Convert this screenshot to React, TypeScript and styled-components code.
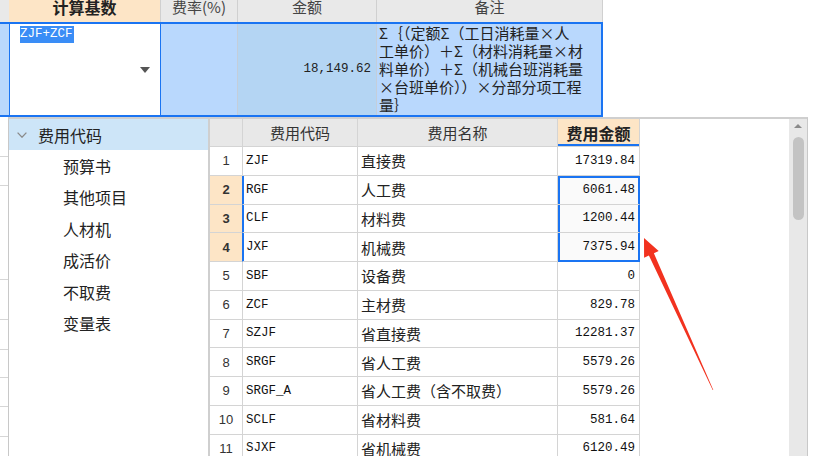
import React from "react";
import styled, { createGlobalStyle, css } from "styled-components";

const CJK = `"Noto Sans CJK SC", "Noto Sans", sans-serif`;
const MONO = `"Liberation Mono", "Noto Sans CJK SC", monospace`;
const BLUE = "#1a74f2";
const PEACH = "#fde5c6";
const LINE = "#d4d4d4";

const GlobalStyle = createGlobalStyle`
  html, body { margin: 0; padding: 0; background: #fff; }
  body { font-family: ${CJK}; }
  #root { width: 825px; height: 456px; }
`;

const Page = styled.div`
  position: relative;
  width: 825px;
  height: 456px;
  overflow: hidden;
  background: #fff;
  display: flex;
  flex-direction: column;
  font-family: ${CJK};
  color: #222;
`;

/* ---------- background sheet ---------- */
const SheetHeader = styled.div`
  display: flex;
  height: 22px;
  width: 603px;
  flex: none;
`;

const HeadCell = styled.div<{ $w: number; $active?: boolean; $stub?: boolean }>`
  width: ${(p) => p.$w}px;
  flex: none;
  box-sizing: border-box;
  height: 22px;
  background: ${(p) => (p.$active ? PEACH : "#e9e9e9")};
  border-right: ${(p) => (p.$stub ? "none" : "1px solid #d0d0d0")};
  display: flex;
  align-items: center;
  justify-content: center;
  padding-bottom: 8px;
  font-size: ${(p) => (p.$active ? 16 : 15)}px;
  font-weight: ${(p) => (p.$active ? 700 : 400)};
  line-height: 14px;
  color: ${(p) => (p.$active ? "#222" : "#444")};
  white-space: nowrap;
`;

const SelRow = styled.div`
  display: flex;
  width: 603px;
  height: 95px;
  flex: none;
  box-sizing: border-box;
  border: 2px solid ${BLUE};
  border-left: none;
`;

const RowCell = styled.div<{ $w?: number; $bg: string }>`
  ${(p) => (p.$w ? `width: ${p.$w}px; flex: none;` : "flex: 1;")}
  box-sizing: border-box;
  background: ${(p) => p.$bg};
  border-right: 1px solid #c4ceda;
`;

const StubCell = styled.div`
  width: 9px;
  flex: none;
  background: #b9d8fd;
`;

const EditorCell = styled.div`
  width: 152px;
  flex: none;
  box-sizing: border-box;
  background: #fff;
  border-left: 1px solid ${BLUE};
  border-right: 1px solid ${BLUE};
  padding: 2px 10px 0 10px;
  display: flex;
  flex-direction: column;
`;

const SelText = styled.span`
  align-self: flex-start;
  background: #3a8df6;
  color: #fff;
  font-family: ${MONO};
  font-size: 12.5px;
  line-height: 17px;
  padding-right: 1px;
`;

const DropTri = styled.span`
  align-self: flex-end;
  margin-top: 24px;
  width: 0;
  height: 0;
  border-left: 5px solid transparent;
  border-right: 5px solid transparent;
  border-top: 6px solid #555;
`;

const AmountCell = styled(RowCell)`
  display: flex;
  align-items: center;
  justify-content: flex-end;
  padding-right: 5px;
  padding-bottom: 2px;
  font-family: ${MONO};
  font-size: 12.5px;
  color: #222;
`;

const NoteCell = styled(RowCell)`
  border-right: none;
  padding-left: 2px;
  font-size: 15px;
  line-height: 18px;
  color: #222;
  white-space: nowrap;
`;

/* ---------- lower area ---------- */
const Lower = styled.div`
  display: flex;
  flex: 1;
  min-height: 0;
`;

const LeftStrip = styled.div`
  width: 8px;
  flex: none;
  display: flex;
  flex-direction: column;
`;

const StripRow = styled.div<{ $h: number }>`
  height: ${(p) => p.$h}px;
  flex: none;
  box-sizing: border-box;
  border-bottom: 1px solid #d6d6d6;
`;

const Popup = styled.div`
  width: 800px;
  flex: none;
  box-sizing: border-box;
  border-top: 2px solid #cfcfcf;
  border-left: 1px solid #c8c8c8;
  border-right: 1px solid #c8c8c8;
  background: #fff;
  display: flex;
`;

const Tree = styled.div`
  width: 201px;
  flex: none;
  box-sizing: border-box;
  border-right: 2px solid #cfcfcf;
  display: flex;
  flex-direction: column;
`;

const TreeItem = styled.div<{ $root?: boolean }>`
  display: flex;
  align-items: center;
  gap: 11px;
  font-size: 16px;
  color: #222;
  white-space: nowrap;
  ${(p) =>
    p.$root
      ? css`
          height: 31px;
          padding-left: 8px;
          background: #cde5f8;
        `
      : css`
          height: 31.5px;
          padding-left: 54px;
        `}
`;

const GridPanel = styled.div`
  flex: 1;
  display: flex;
`;

const GridTable = styled.div`
  width: 430px;
  flex: none;
  display: grid;
  grid-template-columns: 33px 115px 200px 82px;
  grid-template-rows: 28px repeat(11, 28.75px);
  align-content: start;
`;

const Cell = styled.div`
  box-sizing: border-box;
  border-right: 1px solid ${LINE};
  border-bottom: 1px solid ${LINE};
  display: flex;
  align-items: center;
  white-space: nowrap;
  overflow: hidden;
`;

const GridHead = styled(Cell)<{ $active?: boolean }>`
  justify-content: center;
  background: ${(p) => (p.$active ? PEACH : "#e8e8e8")};
  font-size: ${(p) => (p.$active ? 16 : 15)}px;
  font-weight: ${(p) => (p.$active ? 700 : 400)};
  color: ${(p) => (p.$active ? "#222" : "#333")};
  ${(p) => p.$active && css`box-shadow: inset 0 -2px ${BLUE};`}
`;

const NumCell = styled(Cell)<{ $sel?: boolean }>`
  justify-content: center;
  font-family: "Liberation Sans", "DejaVu Sans", sans-serif;
  font-size: 13px;
  color: #333;
  ${(p) =>
    p.$sel &&
    css`
      background: ${PEACH};
      font-weight: 700;
      border-right-color: ${BLUE};
    `}
`;

const CodeCell = styled(Cell)<{ $sel?: boolean }>`
  padding-left: 3px;
  font-family: ${MONO};
  font-size: 12.5px;
  color: #111;
  ${(p) => p.$sel && css`box-shadow: inset 1px 0 ${BLUE};`}
`;

const NameCell = styled(Cell)`
  padding-left: 3px;
  font-size: 15px;
  color: #222;
`;

const AmtCell = styled(Cell)<{ $sel?: boolean; $first?: boolean; $last?: boolean }>`
  justify-content: flex-end;
  padding-right: 4px;
  font-family: ${MONO};
  font-size: 12.5px;
  color: #111;
  ${(p) =>
    p.$sel &&
    css`
      background: #fafafa;
      border-right-color: ${BLUE};
      ${p.$last ? `border-bottom-color: ${BLUE};` : ""}
      box-shadow: inset 2px 0 ${BLUE}, inset -1px 0 ${BLUE}
        ${p.$first ? `, inset 0 2px ${BLUE}` : ""}
        ${p.$last ? `, inset 0 -1px ${BLUE}` : ""};
    `}
`;

const GridSpace = styled.div`
  flex: 1;
`;

const Scrollbar = styled.div`
  width: 18px;
  flex: none;
  background: #e8e8e8;
  display: flex;
  flex-direction: column;
  align-items: center;
  padding-top: 5px;
  box-sizing: border-box;
`;

const ScrollUp = styled.span`
  width: 0;
  height: 0;
  border-left: 4.5px solid transparent;
  border-right: 4.5px solid transparent;
  border-bottom: 4px solid #8a8a8a;
`;

const ScrollThumb = styled.div`
  margin-top: 9px;
  width: 11px;
  height: 83px;
  border-radius: 6px;
  background: #c3c3c3;
`;

const ArrowLayer = styled.svg`
  position: absolute;
  left: 0;
  top: 0;
  width: 825px;
  height: 456px;
  pointer-events: none;
`;

const noteLines = [
  "Σ｛（定额Σ（工日消耗量×人",
  "工单价）＋Σ（材料消耗量×材",
  "料单价）＋Σ（机械台班消耗量",
  "×台班单价））×分部分项工程",
  "量｝",
];

const treeChildren = ["预算书", "其他项目", "人材机", "成活价", "不取费", "变量表"];

const rows: [number, string, string, string][] = [
  [1, "ZJF", "直接费", "17319.84"],
  [2, "RGF", "人工费", "6061.48"],
  [3, "CLF", "材料费", "1200.44"],
  [4, "JXF", "机械费", "7375.94"],
  [5, "SBF", "设备费", "0"],
  [6, "ZCF", "主材费", "829.78"],
  [7, "SZJF", "省直接费", "12281.37"],
  [8, "SRGF", "省人工费", "5579.26"],
  [9, "SRGF_A", "省人工费（含不取费）", "5579.26"],
  [10, "SCLF", "省材料费", "581.64"],
  [11, "SJXF", "省机械费", "6120.49"],
];

const stripHeights = [40, 29, 94, 40, 30, 28, 29, 30, 40];

const Chevron = () => (
  <svg width="10" height="6" viewBox="0 0 10 6">
    <polyline points="0.6,0.6 5,5.2 9.4,0.6" fill="none" stroke="#8a8a8a" strokeWidth="1.3" />
  </svg>
);

export default function App() {
  return (
    <>
      <GlobalStyle />
      <Page>
        <SheetHeader>
          <HeadCell $w={9} $stub />
          <HeadCell $w={152} $active>计算基数</HeadCell>
          <HeadCell $w={77}>费率(%)</HeadCell>
          <HeadCell $w={139}>金额</HeadCell>
          <HeadCell $w={226}>备注</HeadCell>
        </SheetHeader>
        <SelRow>
          <StubCell />
          <EditorCell>
            <SelText>ZJF+ZCF</SelText>
            <DropTri />
          </EditorCell>
          <RowCell $w={77} $bg="#b9d8fd" />
          <AmountCell $w={139} $bg="#b4d5f3">18,149.62</AmountCell>
          <NoteCell $bg="#b9d8fd">
            {noteLines.map((l, i) => (
              <div key={i}>{l}</div>
            ))}
          </NoteCell>
        </SelRow>
        <Lower>
          <LeftStrip>
            {stripHeights.map((h, i) => (
              <StripRow key={i} $h={h} />
            ))}
          </LeftStrip>
          <Popup>
            <Tree>
              <TreeItem $root>
                <Chevron />
                <span>费用代码</span>
              </TreeItem>
              {treeChildren.map((t) => (
                <TreeItem key={t}>{t}</TreeItem>
              ))}
            </Tree>
            <GridPanel>
              <GridTable>
                <GridHead />
                <GridHead>费用代码</GridHead>
                <GridHead>费用名称</GridHead>
                <GridHead $active>费用金额</GridHead>
                {rows.map(([n, code, name, amt]) => {
                  const sel = n >= 2 && n <= 4;
                  return (
                    <React.Fragment key={n}>
                      <NumCell $sel={sel}>{n}</NumCell>
                      <CodeCell $sel={sel}>{code}</CodeCell>
                      <NameCell>{name}</NameCell>
                      <AmtCell $sel={sel} $first={n === 2} $last={n === 4}>
                        {amt}
                      </AmtCell>
                    </React.Fragment>
                  );
                })}
              </GridTable>
              <GridSpace />
              <Scrollbar>
                <ScrollUp />
                <ScrollThumb />
              </Scrollbar>
            </GridPanel>
          </Popup>
        </Lower>
        <ArrowLayer viewBox="0 0 825 456">
          <polygon points="644,238 658.7,251.1 653.9,253.3 713.3,389.9 712.7,390.1 648.9,255.5 644.1,257.7" fill="#f2321f" />
        </ArrowLayer>
      </Page>
    </>
  );
}
